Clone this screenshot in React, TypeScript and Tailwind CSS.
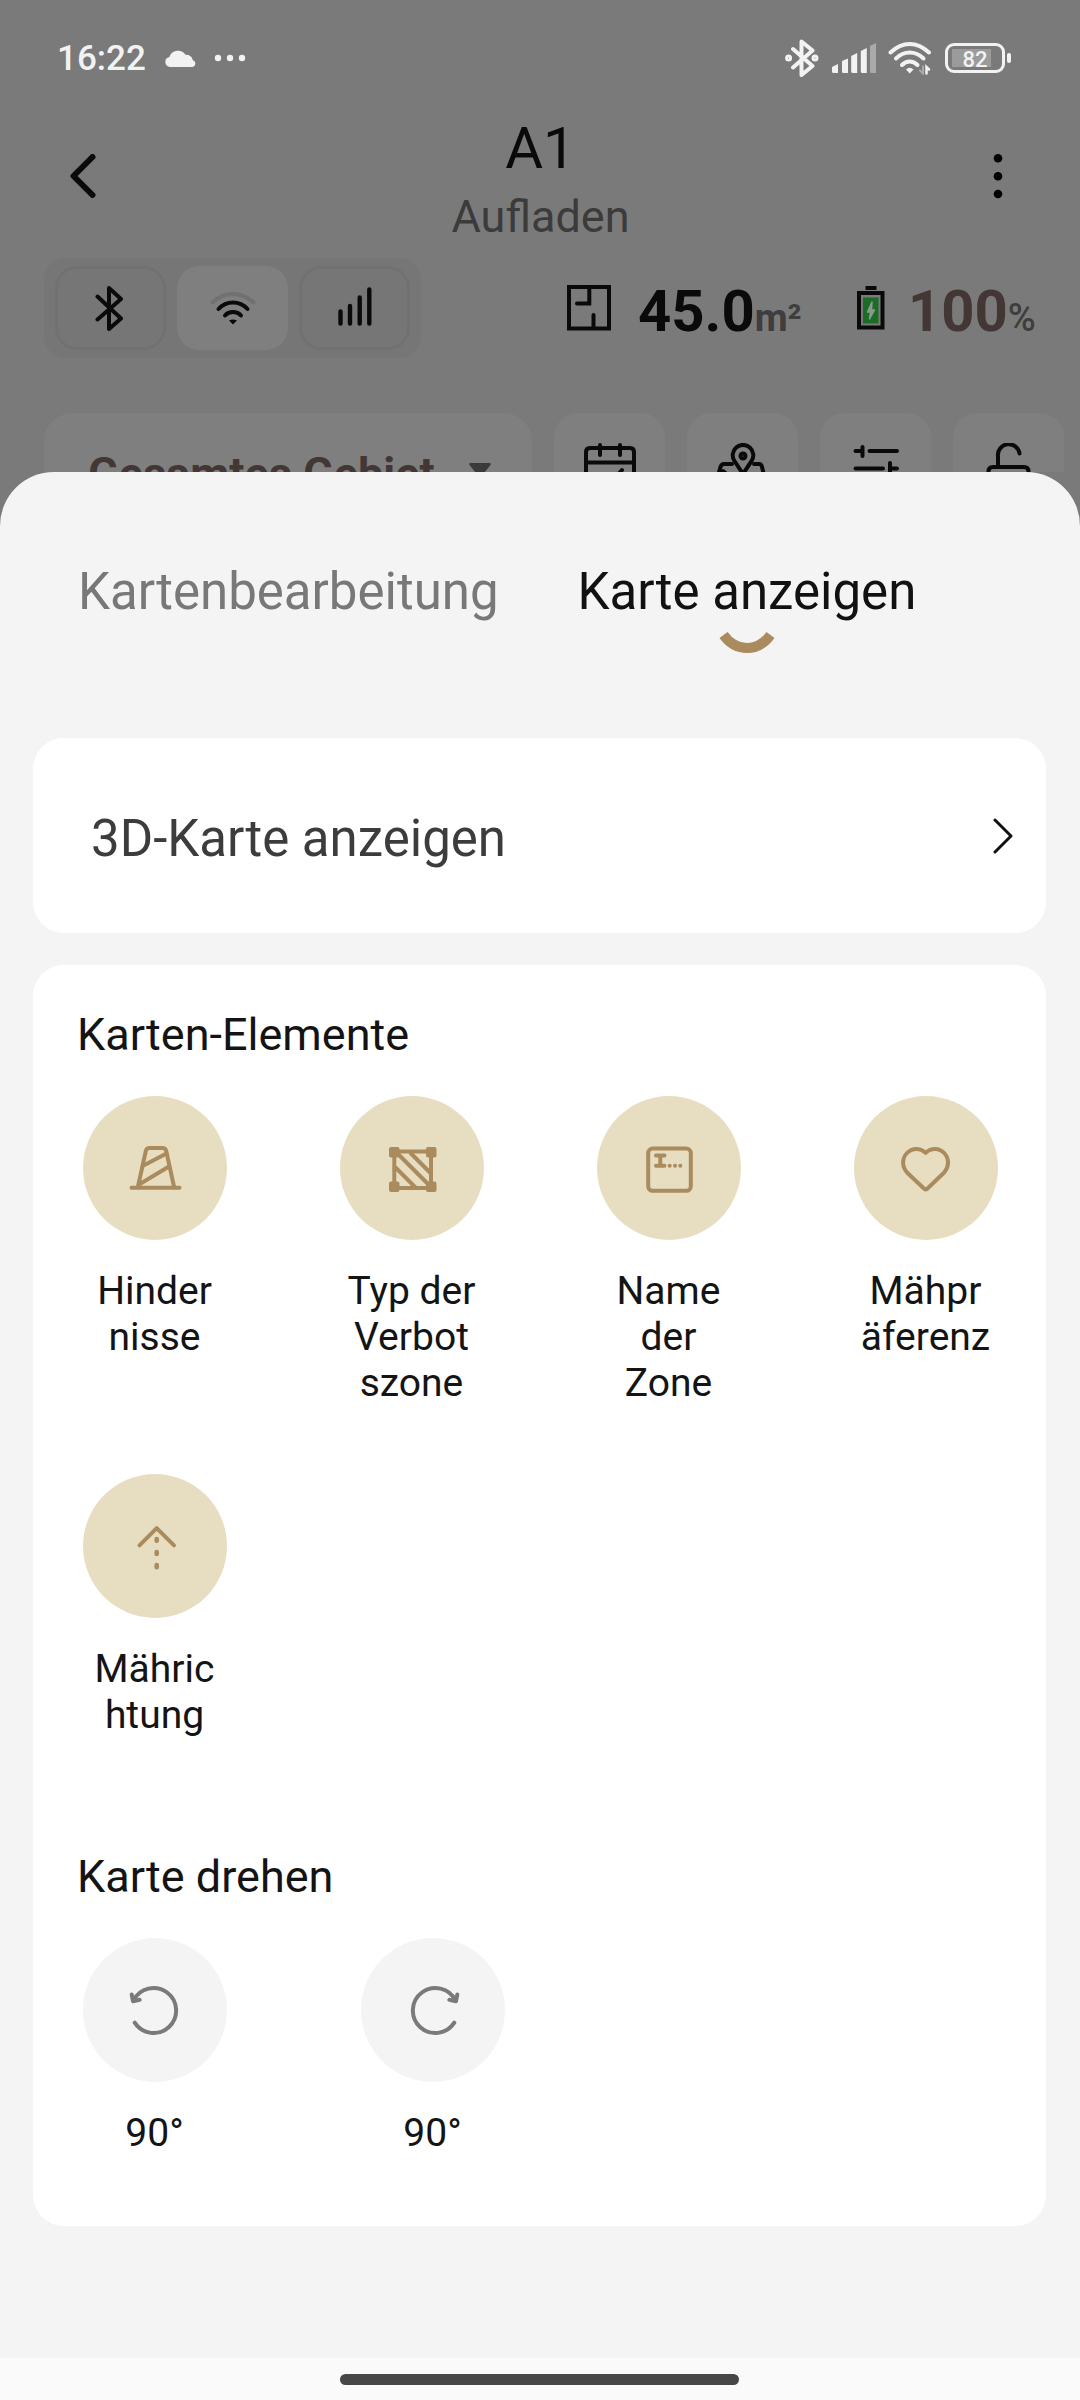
import type { ReactNode } from "react";

type MapElement = {
  id: string;
  lines: string[];
  icon: ReactNode;
};

function StatusBar() {
  return (
    <div className="flex h-[116px] items-center justify-between pl-[57px] pr-[69px] text-[#f2f2f2]">
      <div className="flex items-center">
        <span className="text-[35px] font-medium leading-none">16:22</span>
        <svg className="ml-[19px]" width="32" height="20" viewBox="0 0 32 20" fill="currentColor">
          <path d="M5 19a5 5 0 0 1-.6-9.900A9 9 0 0 1 20.500 6.800 6.500 6.500 0 0 1 27.800 12.200 3.500 3.500 0 0 1 27.500 19Z" />
        </svg>
        <svg className="ml-[17px]" width="32" height="8" viewBox="0 0 32 8" fill="currentColor">
          <circle cx="4" cy="4" r="3.200" />
          <circle cx="16" cy="4" r="3.200" />
          <circle cx="28" cy="4" r="3.200" />
        </svg>
      </div>

      <div className="flex items-center">
        <svg width="34" height="38" viewBox="0 0 34 38" fill="none" stroke="currentColor" strokeWidth="4" strokeLinejoin="round" strokeLinecap="round">
          <path d="M8 10 27.500 27 16.500 36V2.500L27.500 11.500 8 28.500" />
          <circle cx="3.600" cy="19" r="1.500" />
          <circle cx="30" cy="19" r="1.500" />
        </svg>
        <svg className="ml-[13px]" width="44" height="30" viewBox="0 0 44 30" fill="currentColor">
          <path d="M0 24 6 21V30H1.500Q0 30 0 28.500Z" />
          <path d="M10 18 16 15.500V30H11.500Q10 30 10 28.500Z" />
          <path d="M19.200 13 25.200 10V30H20.700Q19.200 30 19.200 28.500Z" />
          <path d="M28.800 8 34.800 5V30H30.300Q28.800 30 28.800 28.500Z" />
          <path d="M38 3 44 0V30H39.500Q38 30 38 28.500Z" opacity=".4" />
        </svg>
        <svg className="ml-[12px]" width="44" height="34" viewBox="0 0 44 34" fill="none" stroke="currentColor" strokeWidth="4" strokeLinecap="round">
          <path d="M2.500 11.500Q11.500 3 21.700 3T41 11.500" />
          <path d="M8 17.500Q14 11.500 21.700 11.500T35.500 17.500" />
          <path d="M14 24Q17.500 20.500 21.700 20.500T29.500 24" />
          <path d="M18 28.500Q21.700 25 25.500 28.500L21.700 32.500Z" fill="currentColor" stroke="none" />
          <path d="M35 25.500V32.500L32 29.500" strokeWidth="2" opacity=".4" />
          <path d="M38.500 32.500V26L41 28.500" strokeWidth="2.500" />
        </svg>
        <div className="ml-[13px] flex h-[30px] w-[60px] items-center rounded-[9px] border-[3px] border-[#f2f2f2] p-1">
          <div className="flex h-[18px] w-full items-center justify-center bg-[linear-gradient(to_right,#9b9b9b_85%,transparent_85%)]">
            <span className="pt-[3px] text-[22px] font-medium leading-none">82</span>
          </div>
        </div>
        <div className="ml-[2px] h-[10px] w-[4px] rounded-sm bg-[#f2f2f2]" />
      </div>
    </div>
  );
}

function Header() {
  return (
    <header className="flex h-[129px] justify-between pl-[70px] pr-[77px]">
      <svg className="mt-[38px]" width="26" height="44" viewBox="0 0 26 44" fill="none" stroke="#0a0a0a" strokeWidth="6" strokeLinecap="round" strokeLinejoin="round">
        <path d="M22.500 3 3.500 22 22.500 41" />
      </svg>
      <div className="mr-[8px] text-center">
        <h1 className="text-[58px] leading-[65px] text-[#0a0a0a]">A1</h1>
        <p className="mt-2 text-[45px] leading-[56px] text-[#3b3b3b]">Aufladen</p>
      </div>
      <svg className="mt-[38px]" width="10" height="46" viewBox="0 0 10 46">
        <circle cx="5" cy="4.300" r="4.300" />
        <circle cx="5" cy="22.200" r="4.300" />
        <circle cx="5" cy="40" r="4.300" />
      </svg>
    </header>
  );
}

function ConnectionRow() {
  return (
    <div className="mt-[13px] flex h-[100px] items-center pl-[44px]">
      <div className="flex h-[100px] w-[377px] items-center justify-center gap-[11px] rounded-[22px] bg-[#767676]">
        <div className="flex h-[84px] w-[111px] items-center justify-center rounded-[22px] border-[3px] border-[#717171]">
          <svg className="mr-[3px]" width="28" height="46" viewBox="0 0 28 46" fill="none" stroke="#0a0a0a" strokeWidth="4" strokeLinecap="round" strokeLinejoin="round">
            <path d="M2.500 11.500 26 33.500 14 44V3L26 14 2.500 34.500" />
          </svg>
        </div>
        <div className="flex h-[84px] w-[111px] items-center justify-center rounded-[22px] bg-[#7f7f7f]">
          <svg width="46" height="34" viewBox="0 0 46 34" fill="none" stroke="#0a0a0a" strokeWidth="4" strokeLinecap="round">
            <path d="M2.500 11.500Q11.500 3 23 3T43.500 11.500" stroke="#717171" />
            <path d="M8.500 18Q14.500 11.500 23 11.500T37.500 18" />
            <path d="M15 24.500Q18 21 23 21T31 24.500" />
            <path d="M19 29.500Q23 27.500 27 29.500L23 33.500Z" fill="#0a0a0a" stroke="none" />
          </svg>
        </div>
        <div className="flex h-[84px] w-[111px] items-center justify-center rounded-[22px] border-[3px] border-[#717171]">
          <svg className="mb-[3px]" width="34" height="42" viewBox="0 0 34 42" stroke="#0a0a0a" strokeWidth="4.400" strokeLinecap="round">
            <path d="M2.500 25.500V37.500M12 20V37.500M21.700 11.500V37.500M31.300 3.500V37.500" />
          </svg>
        </div>
      </div>

      <svg className="ml-[146px]" width="44" height="46" viewBox="0 0 44 46" fill="none" stroke="#0a0a0a" strokeWidth="4">
        <path d="M2 2H42V43.500H2Z" />
        <path d="M22.300 2V18.500H10M26.500 43V30" strokeLinecap="round" />
      </svg>
      <div className="ml-[27px] flex w-[219px] items-baseline pt-[6px] font-bold leading-none">
        <span className="text-[58px] text-[#0a0a0a]">45.0</span>
        <span className="text-[38px] text-[#3e3e3e]">m²</span>
      </div>
      <svg className="mb-px" width="28" height="44" viewBox="0 0 28 44">
        <path d="M8.500 0H19.500V4H8.500Z" fill="#0a0a0a" />
        <path d="M2 7H25.500V41.500H2Z" fill="#7a7a7a" stroke="#0a0a0a" strokeWidth="4" />
        <path d="M6 11.500H21.500V37.500H6Z" fill="#1b6c26" />
        <path d="M15 16 10.500 26H13.500L12.500 33 17.500 24H14.500Z" fill="#8a9a8c" stroke="#8a9a8c" strokeWidth="1.500" strokeLinejoin="round" />
      </svg>
      <div className="ml-[23px] flex items-baseline pt-[6px] font-bold leading-none">
        <span className="text-[58px] text-[#423734]">100</span>
        <span className="text-[38px] font-medium text-[#3e3e3e]">%</span>
      </div>
    </div>
  );
}

function ToolButton({ children }: { children: ReactNode }) {
  return (
    <div className="flex h-[120px] w-[111px] shrink-0 justify-center rounded-[24px] bg-[#7f7f7f] pt-[30px]">
      <svg width="56" height="56" viewBox="0 0 56 56" fill="none" stroke="#0a0a0a" strokeWidth="4" strokeLinecap="round" strokeLinejoin="round">
        {children}
      </svg>
    </div>
  );
}

// The sheet covers the lower half of this row.
function Toolbar() {
  return (
    <div className="mt-[55px] flex h-[59px] gap-[22px] overflow-hidden pl-[44px]">
      <div className="flex h-[120px] w-[488px] shrink-0 items-center justify-between rounded-[28px] bg-[#7f7f7f] pl-[44px] pr-[41px]">
        <span className="text-[45px] font-bold leading-none text-[#423734]">Gesamtes Gebiet</span>
        <svg className="mb-[7px]" width="22" height="14" viewBox="0 0 22 14" fill="#3a3a3a">
          <path d="M1.500 0H20.500Q22.500 0 21.500 2L12.500 13Q11 14.500 9.500 13L.500 2Q-.500 0 1.500 0Z" />
        </svg>
      </div>
      <ToolButton>
        <path d="M4 50V9Q4 5 8 5H48Q52 5 52 9V50M4 19.500H52M18 2V12M38 2V12M32 36 40 27" />
      </ToolButton>
      <ToolButton>
        <path d="M28 31 19.500 18A10.300 10.300 0 1 1 36.500 18Z" />
        <circle cx="28" cy="13" r="2.500" />
        <path d="M17 21H9Q6.500 21 5.500 24L2 36M39 21H44Q46.500 21 47 24L50 36M8 28 14 33" />
      </ToolButton>
      <ToolButton>
        <path d="M7.500 8H13M14.500 4V13M21.500 8H49M7.500 25.500H35M42 20V32M42 25.500H49" />
      </ToolButton>
      <ToolButton>
        <path d="M17 24V13.500A10.800 10.800 0 0 1 38.500 10.500M7.500 50V28.500Q7.500 24 12 24H43Q47.500 24 47.500 28.500V50" />
      </ToolButton>
    </div>
  );
}

const elements: MapElement[] = [
  {
    id: "obstacles",
    lines: ["Hinder", "nisse"],
    icon: (
      <>
        <path d="M48.500 91.700H96.500M55 90.500 62.800 55Q63.500 52 66.500 52H79.500Q82.500 52 83.200 55L91 90.500" />
        <path d="M60.500 69.500 83.500 57.500M56 88.500 86 70.500" />
      </>
    ),
  },
  {
    id: "no-go",
    lines: ["Typ der", "Verbot", "szone"],
    icon: (
      <>
        <path d="M54.300 55.500H91V92H54.300Z" />
        <path d="M57 57 90 90M70.500 57 90 76.500M55.500 71.500 76 92" />
        <g fill="#aa8b5d" stroke="none">
          <rect x="49" y="51" width="10.500" height="10.500" rx="2" />
          <rect x="86" y="51" width="10.500" height="10.500" rx="2" />
          <rect x="49" y="85.500" width="10.500" height="10.500" rx="2" />
          <rect x="86" y="85.500" width="10.500" height="10.500" rx="2" />
        </g>
      </>
    ),
  },
  {
    id: "zone-name",
    lines: ["Name", "der", "Zone"],
    icon: (
      <>
        <rect x="51.200" y="52.500" width="42.600" height="42.300" rx="4.500" />
        <path d="M59 59.400H67.500M59 69.700H67.500M63.300 59.400V69.700" />
        <path d="M72.700 69.700H72.710M78 69.700H78.010M83.300 69.700H83.310" />
      </>
    ),
  },
  {
    id: "preference",
    lines: ["Mähpr", "äferenz"],
    icon: (
      <path d="M71.700 56.800C66 51.500 58 51.700 53 57 47.800 62.500 47.800 70.500 53 76.500L70.200 92.700Q71.700 94 73.200 92.700L90.200 76.500C95.300 70.500 95.300 62.500 90.200 57 85.200 51.700 77.300 51.500 71.700 56.800Z" />
    ),
  },
  {
    id: "direction",
    lines: ["Mähric", "htung"],
    icon: (
      <>
        <path d="M56.500 71.300 73.700 54.200 91 71.300" />
        <path d="M73.700 65V66.800M73.700 78V80M73.700 91V93.300" strokeWidth="4.600" />
      </>
    ),
  },
];

function MapElementButton({ element }: { element: MapElement }) {
  return (
    <div className="flex flex-col items-center">
      <div className="h-36 w-36 rounded-full bg-[#e7dec2]">
        <svg width="144" height="144" viewBox="0 0 144 144" fill="none" stroke="#aa8b5d" strokeWidth="4" strokeLinecap="round" strokeLinejoin="round">
          {element.icon}
        </svg>
      </div>
      <div className="mr-px mt-7 text-center text-[39px] leading-[46px]">
        {element.lines.map((line) => (
          <div key={line}>{line}</div>
        ))}
      </div>
    </div>
  );
}

function RotateButton({ clockwise = false }: { clockwise?: boolean }) {
  return (
    <div className="flex flex-col items-center">
      <div className="h-36 w-36 rounded-full bg-[#f4f4f4]">
        <svg width="144" height="144" viewBox="0 0 144 144" fill="none" stroke="#7a7a7a" strokeWidth="4" strokeLinecap="round" strokeLinejoin="round">
          <g transform={clockwise ? "translate(145 0) scale(-1 1)" : undefined}>
            <path d="M51.700 84.700A22.500 22.500 0 1 0 50.500 62.500" />
            <path d="M48.700 56.500 50 63.200 56.700 61.800" />
          </g>
        </svg>
      </div>
      <div className="mr-px mt-7 text-[39px] leading-[46px]">90°</div>
    </div>
  );
}

function MapSheet() {
  return (
    <section className="flex h-[1886px] flex-col rounded-t-[54px] bg-[#f4f4f4] px-[33px] pt-[90px]">
      <div className="flex h-[176px] gap-[79px] pl-[45px] text-[51px] leading-[60px]">
        <span className="text-[#787878]">Kartenbearbeitung</span>
        <div className="flex flex-col items-center text-[#111]">
          <span>Karte anzeigen</span>
          <svg className="mt-[9px]" width="56" height="23" viewBox="0 0 56 23" fill="none" stroke="#aa8b5d" strokeWidth="10">
            <path d="M4.500 4Q14 17 28 17T51.500 4" />
          </svg>
        </div>
      </div>

      <div className="flex h-[195px] w-[1013px] items-center justify-between rounded-[31px] bg-white pl-[58px] pr-[32px]">
        <span className="pt-1.5 text-[51px] leading-[60px] text-[#3c3c3c]">3D-Karte anzeigen</span>
        <svg width="22" height="36" viewBox="0 0 22 36" fill="none" stroke="#111" strokeWidth="3" strokeLinecap="round" strokeLinejoin="round">
          <path d="M3 2 19 18 3 34" />
        </svg>
      </div>

      <div className="mt-8 h-[1261px] w-[1013px] rounded-[31px] bg-white pl-[50px] pt-[43px] text-[#141414]">
        <h2 className="-ml-[6px] text-[45px] leading-[54px]">Karten-Elemente</h2>
        <div className="mt-[34px] grid grid-cols-[repeat(4,144px)] gap-x-[113px] gap-y-[68px]">
          {elements.map((element) => (
            <MapElementButton key={element.id} element={element} />
          ))}
        </div>

        <h2 className="-ml-[6px] mt-[112px] text-[45px] leading-[54px]">Karte drehen</h2>
        <div className="mt-[34px] flex gap-[134px]">
          <RotateButton />
          <RotateButton clockwise />
        </div>
      </div>
    </section>
  );
}

export default function App() {
  return (
    <div className="h-[2400px] w-[1080px] overflow-hidden bg-[#7a7a7a] font-[Roboto,sans-serif]">
      <StatusBar />
      <Header />
      <ConnectionRow />
      <Toolbar />
      <MapSheet />
      <div className="flex h-[42px] justify-center bg-[#fafafa] pr-[2px] pt-4">
        <div className="h-[11px] w-[399px] rounded-full bg-[#474747]" />
      </div>
    </div>
  );
}
